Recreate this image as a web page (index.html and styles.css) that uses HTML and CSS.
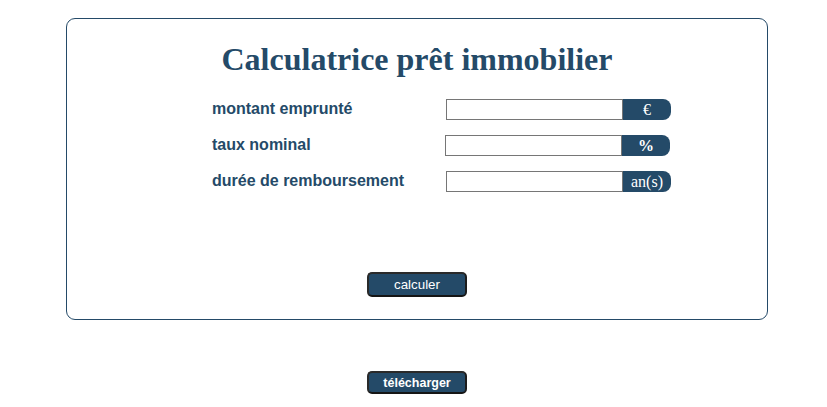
FILE: index.html
```html
<!DOCTYPE html>
<html lang="fr">
<head>
<meta charset="utf-8">
<title>Calculatrice prêt immobilier</title>
<link rel="stylesheet" href="styles.css">
</head>
<body>
<div class="card">
  <h1 class="title">Calculatrice prêt immobilier</h1>
  <form class="form">
    <div class="row">
      <label class="label">montant emprunté</label>
      <input class="field" type="text">
      <span class="unit">€</span>
    </div>
    <div class="row row-shift">
      <label class="label">taux nominal</label>
      <input class="field" type="text">
      <span class="unit unit-bold">%</span>
    </div>
    <div class="row">
      <label class="label">durée de remboursement</label>
      <input class="field" type="text">
      <span class="unit">an(s)</span>
    </div>
    <div class="actions">
      <button class="btn" type="button">calculer</button>
    </div>
  </form>
</div>
<div class="download">
  <button class="btn btn-dl" type="button">télécharger</button>
</div>
</body>
</html>
```

FILE: styles.css
```css
html, body {
  margin: 0;
  padding: 0;
  background: #ffffff;
}
body {
  padding: 18px 0 0 66px;
  font-family: "Liberation Sans", Arial, sans-serif;
  color: #244a68;
}
.card {
  width: 700px;
  border: 1px solid #244a68;
  border-radius: 9px;
  padding: 0 0 22px 0;
}
.title {
  margin: 22px 0 21px 0;
  font-family: "Liberation Serif", "Times New Roman", serif;
  font-size: 32px;
  line-height: 37px;
  font-weight: bold;
  text-align: center;
  color: #244a68;
}
.form {
  margin: 0;
  padding-left: 145px;
  display: flex;
  flex-direction: column;
  gap: 15px;
}
.row {
  display: flex;
  align-items: center;
  height: 21px;
}
.row-shift .field {
  margin-left: -1px;
}
.label {
  width: 234px;
  font-size: 16px;
  font-weight: bold;
  color: #244a68;
  position: relative;
  top: -1px;
}
.field {
  box-sizing: border-box;
  width: 177px;
  height: 21px;
  margin: 0;
  padding: 1px 3px;
  border: 1px solid #767676;
  border-radius: 0;
  background: #fff;
  font-size: 13px;
}
.unit {
  box-sizing: border-box;
  width: 48px;
  height: 21px;
  background: #244a68;
  color: #ffffff;
  border-radius: 0 8px 8px 0;
  display: flex;
  align-items: center;
  justify-content: center;
  font-family: "Liberation Serif", "Times New Roman", serif;
  font-size: 16px;
  line-height: 1;
}
.unit-bold {
  font-weight: bold;
}
.actions {
  display: flex;
  justify-content: center;
  margin-top: 65px;
  padding-right: 145px;
}
.btn {
  box-sizing: border-box;
  width: 100px;
  height: 25px;
  margin: 0;
  padding: 0;
  background: #244a68;
  color: #ffffff;
  border: 2px solid #2a2a2a;
  border-bottom-color: #151515;
  border-right-color: #1c1c1c;
  border-radius: 5px;
  font-family: "Liberation Sans", Arial, sans-serif;
  font-size: 13.33px;
  cursor: pointer;
}
.download {
  width: 702px;
  display: flex;
  justify-content: center;
  margin-top: 51px;
}
.btn-dl {
  height: 23px;
  font-weight: bold;
  font-size: 12.5px;
}
```
